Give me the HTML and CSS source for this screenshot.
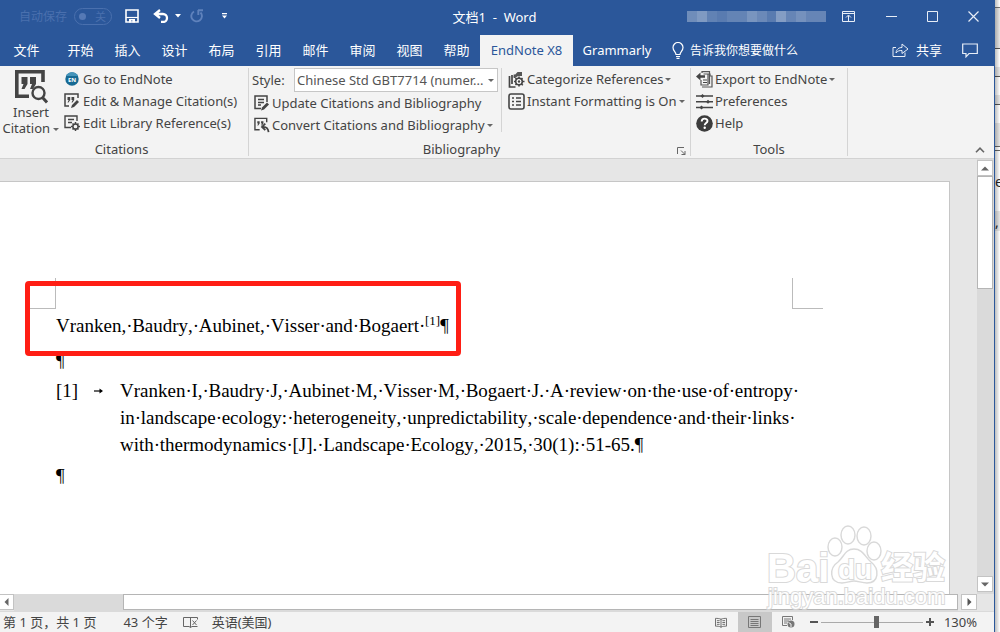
FILE: index.html
```html
<!DOCTYPE html>
<html lang="zh-CN">
<head>
  <meta charset="UTF-8" />
  <meta name="viewport" content="width=device-width, initial-scale=1.0" />
  <title>文档1 - Word</title>
  <link rel="stylesheet" href="styles.css">
</head>
<body>
  <div class="window">
    <header class="titlebar">
      <div class="quick">
        <label class="autosave" for="autosave">自动保存</label>
        <span class="toggle"><input type="checkbox" id="autosave" disabled /><span>关</span></span>
        <button class="save" aria-label="保存"><svg width="14" height="14" viewBox="0 0 14 14"><path d="M1 1h12v12H1z" fill="none" stroke="#fff" stroke-width="1.6"/><path d="M1 8.500h12" fill="none" stroke="#fff" stroke-width="1.200"/><path d="M4 10h6v3.500H7.500v-2H6v2H4z" fill="#fff"/></svg></button>
        <button class="undo" aria-label="撤销"><svg width="16" height="14" viewBox="0 0 16 14"><path d="M7 1L2 5l5 4M2.500 5H10a4 4 0 0 1 0 8H8" fill="none" stroke="#fff" stroke-width="2.300"/></svg></button>
        <svg class="undo-arrow" width="6" height="4" viewBox="0 0 6 4"><path d="M0 0h6L3 3.500z" fill="#fff"/></svg>
        <button class="redo" aria-label="重复"><svg width="14" height="14" viewBox="0 0 14 14"><path d="M4 2.500a5.300 5.300 0 1 0 6.500 1M8 1.200h5M8.300 1v5" fill="none" stroke="#5f82bc" stroke-width="1.900"/></svg></button>
        <button class="more" aria-label="自定义"><svg width="5" height="6" viewBox="0 0 6 7"><path d="M0 0h6v1.300H0zM0 3h6L3 6.500z" fill="#fff"/></svg></button>
      </div>
      <div class="doc-title">文档1 &nbsp;-&nbsp; Word</div>
      <div class="window-controls">
        <svg class="account" width="139" height="11" viewBox="0 0 139 11">
          <g fill="#fff"><path opacity=".32" d="M0 0h10v11H0z"/><path opacity=".4" d="M10 0h10v11H10z"/><path opacity=".26" d="M20 0h10v11H20z"/><path opacity=".22" d="M30 0h10v11H30z"/><path opacity=".27" d="M40 0h20v11H40z"/><path opacity=".37" d="M60 0h10v11H60z"/><path opacity=".3" d="M70 0h10v11H70z"/><path opacity=".22" d="M80 0h9v11h-9z"/><path opacity=".42" d="M89 0h10v11H89z"/><path opacity=".28" d="M99 0h10v11H99z"/><path opacity=".35" d="M109 0h10v11h-10z"/><path opacity=".28" d="M119 0h20v11h-20z"/></g>
        </svg>
        <button class="ribbon-mode" aria-label="功能区显示选项"><svg width="13" height="11" viewBox="0 0 13 11"><path d="M.5.500h12v10H.5zM.5 2.500h12M6.500 10V4.500M4 6.500L6.500 4 9 6.500" fill="none" stroke="#e8eef7"/></svg></button>
        <button aria-label="最小化"><svg width="11" height="11" viewBox="0 0 11 11"><path d="M0 5.500h11" stroke="#e8eef7"/></svg></button>
        <button aria-label="最大化"><svg width="11" height="11" viewBox="0 0 11 11"><path d="M.5.500h10v10H.5z" fill="none" stroke="#e8eef7"/></svg></button>
        <button aria-label="关闭"><svg width="11" height="11" viewBox="0 0 11 11"><path d="M.5.500l10 10M10.500.500l-10 10" stroke="#e8eef7" stroke-width="1.200"/></svg></button>
      </div>
    </header>

    <nav class="tabs">
      <a class="file" href="#">文件</a>
      <a href="#">开始</a>
      <a href="#">插入</a>
      <a href="#">设计</a>
      <a href="#">布局</a>
      <a href="#">引用</a>
      <a href="#">邮件</a>
      <a href="#">审阅</a>
      <a href="#">视图</a>
      <a href="#">帮助</a>
      <a class="active" href="#">EndNote X8</a>
      <a class="grammarly" href="#">Grammarly</a>
      <label class="tell-me" for="tell-me">
        <svg width="12" height="17" viewBox="0 0 12 17"><path d="M4 12.500C4 10 1 9 1 5.500a5 5 0 0 1 10 0C11 9 8 10 8 12.500zM4 14.500h4M4.500 16.300h3" fill="none" stroke="#fff" stroke-width="1.200"/></svg>
        <input type="text" id="tell-me" placeholder="告诉我你想要做什么" />
      </label>
      <button class="share"><svg width="17" height="15" viewBox="0 0 17 15"><path d="M4 5.500H1v9h12v-4M4 11c.5-4 3-5.500 6-5.500V2l6 5-6 4.500V8.500C7.500 8.300 5.500 9 4 11z" fill="none" stroke="#e8eef7"/></svg>共享</button>
      <button class="comment" aria-label="批注"><svg width="16" height="15" viewBox="0 0 16 15"><path d="M.7 1h14.600v9.500H7L4 13.800v-3.300H.7z" fill="none" stroke="#e8eef7" stroke-width="1.200"/></svg></button>
    </nav>

    <section class="ribbon">
      <div class="group citations">
        <div class="group-body">
          <button class="insert">
            <svg width="33" height="34" viewBox="0 0 33 34"><path d="M28 12V1.800H1.800v24.400H14" fill="none" stroke="#444" stroke-width="3.600"/><path d="M6.500 7h6v7l-3 5h-3l2-5h-2zM15 7h6v7l-3 5h-3l2-5h-2z" fill="#444"/><circle cx="23.500" cy="23" r="6" fill="#f3f3f3" stroke="#444" stroke-width="2.400"/><path d="M27.500 27.500l4.500 5" stroke="#444" stroke-width="3"/></svg>
            <span>Insert</span>
            <span>Citation <i class="caret"></i></span>
          </button>
          <div class="commands">
            <button><svg width="16" height="16" viewBox="0 0 16 16"><circle cx="8" cy="8" r="6.700" fill="#176a94"/><path d="M2 5a6.700 6.700 0 0 1 12 0z" fill="#4594ba"/><text x="8" y="10.500" text-anchor="middle" class="en-mark">EN</text></svg>Go to EndNote</button>
            <button><svg width="16" height="16" viewBox="0 0 16 16"><path d="M5 13H1V1h13v4" fill="none" stroke="#444" stroke-width="1.500"/><path d="M3.500 4h2.700v3L4.500 9.500H3.500L4.700 7H3.500zM7.500 4h2.700v3L8.500 9.500h-1L8.700 7H7.500zM7 15l1-3 5-5 2 2-5 5z" fill="#444"/></svg>Edit &amp; Manage Citation(s)</button>
            <button><svg width="16" height="16" viewBox="0 0 16 16"><path d="M7 12.500H1V1h12v5M4 4.500h6M4 7.500h4" fill="none" stroke="#444" stroke-width="1.400"/><circle cx="11.500" cy="11.500" r="2.600" fill="none" stroke="#444" stroke-width="1.500"/><path d="M11.500 7v2M11.500 14v2M7 11.500h2M14 11.500h2M8.500 8.500l1 1M13.500 13.500l1 1M14.500 8.500l-1 1M9.500 13.500l-1 1" stroke="#444" stroke-width="1.500"/></svg>Edit Library Reference(s)</button>
          </div>
        </div>
        <div class="group-name">Citations</div>
      </div>

      <div class="group bibliography">
        <div class="group-body">
          <div class="commands bib-left">
            <div class="style-row">
              <label for="style">Style:</label>
              <span class="select-box"><select id="style"><option>Chinese Std GBT7714 (numer...</option></select><i class="caret"></i></span>
            </div>
            <button><svg width="16" height="16" viewBox="0 0 16 16"><path d="M7 13.500H1V1h12v6M4 4.500h6M4 7.500h6M4 10h3" fill="none" stroke="#444" stroke-width="1.500"/><path d="M7 15.500l1-3 5-5 2 2-5 5z" fill="#444"/></svg>Update Citations and Bibliography</button>
            <button><svg width="16" height="16" viewBox="0 0 17 16"><path d="M6 13H1V1h12.500v4" fill="none" stroke="#444" stroke-width="1.500"/><path d="M3.500 4h2.500v2.500L4.500 8.500h-1l1-2h-1zM7.500 4H10v2.500L8.500 8.500h-1l1-2h-1z" fill="#444"/><path d="M12 6.500L8.500 10l3.500 3.500M9 10c4-.5 6 1.500 6.500 5.500" fill="none" stroke="#444" stroke-width="1.900"/></svg>Convert Citations and Bibliography<i class="caret"></i></button>
          </div>
          <div class="commands bib-right">
            <button><svg width="17" height="17" viewBox="0 0 17 17"><path d="M1.500 5v11h6M4 4v9M6.500 3.500V7" fill="none" stroke="#444" stroke-width="1.700"/><path d="M5.500 5.500L9.500 1H14v4h-4L7 7z" fill="#555"/><circle cx="11" cy="10.500" r="3.300" fill="#fff" stroke="#444" stroke-width="1.600"/><circle cx="11" cy="10.500" r="1.200" fill="#444"/><path d="M11 5.500v2M11 13.500v2M6 10.500h2M14 10.500h2.500M7.500 7l1 1M13.500 13l1.300 1.300M14.500 7l-1 1M8.500 13l-1 1" stroke="#444" stroke-width="1.600"/></svg>Categorize References<i class="caret"></i></button>
            <button><svg width="17" height="17" viewBox="0 0 17 17"><rect x="1" y="1" width="15" height="15" rx="2" fill="none" stroke="#444" stroke-width="1.600"/><path d="M4 5h2M8 5h5M4 8.500h2M8 8.500h5M4 12h2M8 12h5" stroke="#444" stroke-width="1.500"/></svg>Instant Formatting is On<i class="caret"></i></button>
          </div>
        </div>
        <div class="group-name">Bibliography</div>
        <button class="launcher" aria-label="Bibliography options"><svg width="9" height="8" viewBox="0 0 9 8"><path d="M.5 7V.500H7M4 3.500l4 4M8 4v3.500H4.500" fill="none" stroke="#666"/></svg></button>
      </div>

      <div class="group tools">
        <div class="group-body">
          <div class="commands">
            <button><svg width="17" height="17" viewBox="0 0 17 17"><path d="M6 2V.700h7.500V13M5 9v5h7V3M7.500 3h6.500v2h2v11H6" fill="none" stroke="#555" stroke-width="1.200"/><path d="M0 5.500L4.500 1.500v2.700H9v2.600H4.500v2.700z" fill="#444"/><path d="M7 9h4M7 11.500h4" stroke="#444"/></svg>Export to EndNote<i class="caret"></i></button>
            <button><svg width="17" height="17" viewBox="0 0 17 17"><path d="M0 3h17M0 8.800h17M0 14.500h17" stroke="#444" stroke-width="1.500"/><path d="M4.500 3l2-2 2 2-2 2zM10 8.800l2-2 2 2-2 2zM3.500 14.500l2-2 2 2-2 2z" fill="#444"/></svg>Preferences</button>
            <button><svg width="17" height="17" viewBox="0 0 17 17"><circle cx="8.500" cy="8.500" r="8.300" fill="#3c3c3c"/><path d="M5.700 6.500c0-3.800 5.800-3.600 5.800-.5 0 2-2.800 2.200-2.800 4.300" fill="none" stroke="#fff" stroke-width="1.900"/><circle cx="8.700" cy="12.800" r="1.200" fill="#fff"/></svg>Help</button>
          </div>
        </div>
        <div class="group-name">Tools</div>
      </div>
      <button class="collapse" aria-label="折叠功能区"><svg width="10" height="6" viewBox="0 0 10 6"><path d="M1 5.200L5 1.200l4 4" fill="none" stroke="#666" stroke-width="1.600"/></svg></button>
    </section>

    <main class="workspace">
      <div class="canvas">
        <article class="page">
          <div class="margins"><span class="mark left"></span><span class="mark right"></span></div>
          <p class="cite">Vranken,<i>·</i>Baudry,<i>·</i>Aubinet,<i>·</i>Visser<i>·</i>and<i>·</i>Bogaert<i>·</i><sup>[1]</sup>¶</p>
          <p>¶</p>
          <div class="reference">
            <span class="number">[1]</span>
            <svg class="tab-mark" width="9" height="6" viewBox="0 0 9 6"><path d="M0 3h7" stroke="#000" stroke-width="1.200"/><path d="M5.500.500L9 3 5.500 5.500z"/></svg>
            <div class="entry">
              <div>Vranken<i>·</i>I,<i>·</i>Baudry<i>·</i>J,<i>·</i>Aubinet<i>·</i>M,<i>·</i>Visser<i>·</i>M,<i>·</i>Bogaert<i>·</i>J.<i>·</i>A<i>·</i>review<i>·</i>on<i>·</i>the<i>·</i>use<i>·</i>of<i>·</i>entropy<i>·</i></div>
              <div>in<i>·</i>landscape<i>·</i>ecology:<i>·</i>heterogeneity,<i>·</i>unpredictability,<i>·</i>scale<i>·</i>dependence<i>·</i>and<i>·</i>their<i>·</i>links<i>·</i></div>
              <div>with<i>·</i>thermodynamics<i>·</i>[J].<i>·</i>Landscape<i>·</i>Ecology,<i>·</i>2015,<i>·</i>30(1):<i>·</i>51-65.¶</div>
            </div>
          </div>
          <p>¶</p>
          <div class="highlight"></div>
        </article>
      </div>
      <div class="vscroll">
        <button aria-label="向上"><svg width="8" height="5" viewBox="0 0 8 5"><path d="M0 4.500L4 .500l4 4z" fill="#666"/></svg></button>
        <div class="thumb"></div>
        <button class="down" aria-label="向下"><svg width="8" height="5" viewBox="0 0 8 5"><path d="M0 .500h8l-4 4z" fill="#666"/></svg></button>
      </div>
    </main>

    <div class="hscroll">
      <button aria-label="向左"><svg width="5" height="8" viewBox="0 0 5 8"><path d="M4.500 0v8L.5 4z" fill="#666"/></svg></button>
      <div class="track"><div class="thumb"></div></div>
      <button aria-label="向右"><svg width="5" height="8" viewBox="0 0 5 8"><path d="M.5 0v8l4-4z" fill="#555"/></svg></button>
    </div>

    <footer class="statusbar">
      <span class="pages">第 1 页，共 1 页</span>
      <span class="words">43 个字</span>
      <svg class="proof" width="15" height="12" viewBox="0 0 15 12"><path d="M7 1.500H.5v9H6l1.500 1L9 10.500h5.500M7.500 1v10.500M7 1.500h7.500v2M9.500 4.500l4 4.500M13.500 4.500l-4 4.500" fill="none" stroke="#666"/></svg>
      <span class="language">英语(美国)</span>
      <div class="views">
        <button aria-label="阅读视图"><svg width="12" height="11" viewBox="0 0 13 12"><path d="M6.500 2v9.500M.5 1.500c2 0 4 0 6 1 2-1 4-1 6-1v8.500c-2 0-4 0-6 1-2-1-4-1-6-1zM2 4h3M2 6h3M2 8h3M8 4h3M8 6h3M8 8h3" fill="none" stroke="#666"/></svg></button>
        <button class="current" aria-label="页面视图"><svg width="13" height="12" viewBox="0 0 13 12"><path d="M.5.500h12v11H.5zM2.500 3.500h8M2.500 5.500h8M2.500 7.500h8M2.500 9.500h8" fill="none" stroke="#777"/></svg></button>
        <button aria-label="Web 版式"><svg width="13" height="12" viewBox="0 0 13 12"><path d="M5 9.500H.5v-9h10V4M2 3h7M2 5h5M2 7h3" fill="none" stroke="#777"/><circle cx="9" cy="8" r="3.500" fill="#777"/><path d="M6.500 6.500L9 8v3" stroke="#f1f1f1" fill="none"/></svg></button>
      </div>
      <div class="zoom">
        <button aria-label="缩小"><svg width="8" height="8" viewBox="0 0 8 8"><path d="M0 4h8" stroke="#555" stroke-width="2"/></svg></button>
        <input type="range" min="10" max="230" value="130" aria-label="缩放" />
        <button aria-label="放大"><svg width="8" height="8" viewBox="0 0 8 8"><path d="M0 4h8M4 0v8" stroke="#555" stroke-width="2"/></svg></button>
        <output>130%</output>
      </div>
    </footer>
  </div>

  <aside class="behind"><span>e</span><span class="comma">,</span></aside>

  <svg class="watermark" width="184" height="88" viewBox="0 0 184 88">
    <g fill="#fff" stroke="#d5d5d5" stroke-width="2">
      <text class="wm-logo" x="1" y="57">Bai</text>
      <g stroke-width="1.400">
        <ellipse cx="69" cy="22" rx="7" ry="9"/>
        <ellipse cx="82" cy="10" rx="7" ry="9"/>
        <ellipse cx="98" cy="11" rx="7" ry="9"/>
        <ellipse cx="108" cy="26" rx="7" ry="9"/>
        <path d="M88 24c-9 0-10 8-16 13-9 6-9 21 4 21 5 0 8-2 12-2s8 2 13 2c12 0 13-14 4-21-6-5-8-13-17-13z"/>
      </g>
      <text class="wm-du" x="72" y="54">du</text>
      <text class="wm-cn" x="115" y="54">经验</text>
      <text class="wm-url" x="2" y="79">jingyan.baidu.com</text>
    </g>
  </svg>
</body>
</html>
```

FILE: styles.css
```css
* {
  box-sizing: border-box;
}
body {
  margin: 0;
  display: flex;
  height: 100vh;
  overflow: hidden;
  font-family: "Noto Sans", "Noto Sans CJK SC", sans-serif;
  font-size: 13px;
  color: #444;
  background: #fff;
}
button, input, select {
  font: inherit;
  color: inherit;
  border: 0;
  margin: 0;
  padding: 0;
  background: none;
}
button, .tabs a {
  white-space: nowrap;
}
svg {
  flex: none;
}
.window {
  flex: 1;
  min-width: 0;
  display: flex;
  flex-direction: column;
  border-right: 1px solid #2b579a;
  background: #f3f3f3;
}

/* title bar */
.titlebar {
  display: grid;
  grid-template-columns: 1fr auto 1fr;
  align-items: center;
  height: 35px;
  flex: none;
  padding-bottom: 3px;
  color: #fff;
  background: #2b579a;
}
.quick {
  display: flex;
  align-items: center;
  padding-left: 19px;
}
.quick button {
  display: flex;
}
.autosave {
  font-size: 12px;
  color: #4a70ae;
}
.toggle {
  position: relative;
  margin-left: 7px;
  width: 38px;
  height: 17px;
  font-size: 11px;
  line-height: 15px;
  color: #4a70ae;
  border: 1px solid #4a70ae;
  border-radius: 9px;
  text-align: right;
  padding-right: 5px;
}
.toggle input {
  appearance: none;
  position: absolute;
  left: 4px;
  top: 4px;
  width: 7px;
  height: 7px;
  border-radius: 50%;
  background: #5579b5;
}
.save { margin-left: 13px; }
.undo { margin-left: 14px; }
.undo-arrow { margin-left: 6px; }
.redo { margin-left: 9px; }
.more { margin-left: 18px; }
.doc-title {
  padding-right: 5px;
}
.window-controls {
  display: flex;
  align-items: center;
  justify-content: flex-end;
  height: 30px;
}
.window-controls button {
  display: flex;
  justify-content: center;
  width: 41px;
}
.window-controls .ribbon-mode {
  width: 45px;
}

/* tabs */
.tabs {
  display: flex;
  align-items: stretch;
  height: 31px;
  flex: none;
  color: #fff;
  background: #2b579a;
}
.tabs a {
  width: 47px;
  line-height: 30px;
  text-align: center;
  text-decoration: none;
  color: #fff;
}
.tabs .file {
  width: 57px;
  padding-right: 4px;
}
.tabs .active {
  width: 93px;
  color: #2b579a;
  background: #f3f3f3;
}
.tabs .grammarly {
  width: 88px;
}
.tell-me {
  display: flex;
  align-items: center;
  gap: 6px;
  flex: 1;
  padding-left: 11px;
}
.tell-me input {
  width: 130px;
  font-size: 12px;
}
.tell-me input::placeholder {
  color: #fff;
}
.share {
  display: flex;
  align-items: center;
  gap: 7px;
  padding-bottom: 3px;
}
.comment {
  display: flex;
  align-items: center;
  padding: 0 16px 0 20px;
}

/* ribbon */
.ribbon {
  display: flex;
  height: 93px;
  flex: none;
  padding-top: 2px;
  border-bottom: 1px solid #d2d2d2;
}
.group {
  position: relative;
  display: flex;
  flex-direction: column;
  height: 88px;
  border-right: 1px solid #d4d4d4;
}
.citations { width: 249px; }
.bibliography { width: 442px; }
.tools { width: 157px; }
.group-body {
  display: flex;
  height: 70px;
  flex: none;
}
.group-name {
  line-height: 20px;
  padding-top: 1px;
  text-align: center;
}
.citations .group-name { padding-right: 5px; }
.bibliography .group-name { padding-right: 16px; }
.commands {
  display: flex;
  flex-direction: column;
}
.commands button {
  display: flex;
  align-items: center;
  flex: none;
  gap: 3px;
  height: 22px;
}
.caret {
  display: inline-block;
  border: 3px solid transparent;
  border-top-color: #666;
  border-bottom: 0;
  vertical-align: 2px;
}
.insert {
  display: flex;
  flex-direction: column;
  align-items: center;
  width: 62px;
  padding-top: 2px;
  line-height: 16px;
}
.citations .commands {
  padding-left: 2px;
}
.bib-left {
  width: 253px;
  height: 64px;
  padding-left: 5px;
  border-right: 1px solid #d4d4d4;
}
.bib-right {
  padding-left: 6px;
}
.bib-left button, .bib-right button, .tools .commands button {
  gap: 2px;
}
.tools .commands {
  padding-left: 5px;
}
.style-row {
  display: flex;
  align-items: center;
  justify-content: space-between;
  height: 24px;
  flex: none;
  padding-right: 3px;
}
.style-row label {
  margin-left: -2px;
}
.select-box {
  display: flex;
  align-items: center;
  width: 204px;
  height: 24px;
  padding-right: 3px;
  border: 1px solid #c6c6c6;
  background: #fff;
}
.select-box select {
  appearance: none;
  flex: 1;
  min-width: 0;
  padding-left: 2px;
  color: #555;
}
.en-mark {
  font-size: 6px;
  font-weight: bold;
  fill: #fff;
}
.launcher {
  position: absolute;
  right: 4px;
  bottom: 1px;
  display: flex;
}
.collapse {
  display: flex;
  margin: auto 9px 5px auto;
}

/* document */
.workspace {
  flex: 1;
  min-height: 0;
  display: flex;
  background: #e6e6e6;
}
.canvas {
  flex: 1;
  display: flex;
  padding: 22px 27px 0 0;
}
.page {
  position: relative;
  flex: 1;
  padding: 96px 0 0 56px;
  border-top: 1px solid #c6c6c6;
  border-right: 1px solid #c6c6c6;
  background: #fff;
  font-family: "Liberation Serif", serif;
  font-size: 19px;
  line-height: 32px;
  color: #000;
  font-kerning: none;
}
.page p {
  margin: 0;
}
.page i {
  display: inline-block;
  width: 6px;
  font-style: normal;
  text-align: center;
}
.page .cite {
  margin-bottom: 3px;
}
.page sup {
  font-size: 13px;
  line-height: 0;
  vertical-align: 7px;
}
.margins {
  display: flex;
  justify-content: space-between;
  height: 31px;
  margin: 0 126px 1px -26px;
}
.mark {
  width: 26px;
  border-bottom: 1px solid #bbb;
}
.mark.left {
  border-right: 1px solid #bbb;
}
.mark.right {
  width: 31px;
  border-left: 1px solid #bbb;
}
.reference {
  display: flex;
  margin-bottom: 2px;
  line-height: 27px;
}
.number {
  width: 38px;
}
.tab-mark {
  margin: 11px 17px 0 0;
}
.entry {
  white-space: nowrap;
}
.highlight {
  position: absolute;
  left: 25px;
  top: 99px;
  width: 436px;
  height: 75px;
  border: 5px solid #ff1e14;
  border-radius: 4px;
}

/* scroll bars */
.vscroll {
  display: flex;
  flex-direction: column;
  width: 17px;
  padding: 1px 1px 2px 0;
  background: #dadada;
}
.vscroll button, .hscroll button {
  display: flex;
  align-items: center;
  justify-content: center;
  flex: none;
  width: 16px;
  height: 16px;
  border: 1px solid #c3c3c3;
  background: #fff;
}
.vscroll .thumb {
  height: 113px;
  border: 1px solid #b5b5b5;
  background: #fff;
}
.vscroll .down {
  margin-top: auto;
}
.hscroll {
  display: flex;
  height: 17px;
  flex: none;
  padding-right: 17px;
  background: #e6e6e6;
}
.hscroll button:first-child {
  width: 14px;
  border-left: 0;
}
.hscroll .track {
  flex: 1;
  padding-left: 109px;
  margin-right: 3px;
  background: #dadada;
}
.hscroll .thumb {
  height: 16px;
  border: 1px solid #b5b5b5;
  background: #fff;
}

/* status bar */
.statusbar {
  display: flex;
  align-items: center;
  height: 21px;
  flex: none;
  padding-left: 3px;
  border-top: 1px solid #dadada;
  line-height: 20px;
}
.words { margin-left: 27px; }
.proof { margin-left: 15px; }
.language { margin-left: 14px; }
.views {
  display: flex;
  align-self: stretch;
  margin-left: auto;
}
.views button {
  display: flex;
  align-items: center;
  justify-content: center;
  width: 34px;
}
.views .current {
  background: #c8c8c8;
}
.zoom {
  display: flex;
  align-items: center;
  gap: 3px;
  padding: 0 17px 0 4px;
}
.zoom button {
  display: flex;
}
.zoom input {
  appearance: none;
  width: 102px;
  height: 14px;
  background: linear-gradient(#aaa, #aaa) center / 100% 1px no-repeat;
}
.zoom input::-webkit-slider-thumb {
  appearance: none;
  width: 5px;
  height: 12px;
  background: #666;
}
.zoom output {
  margin-left: 7px;
}

/* edge of the window underneath */
.behind {
  width: 5px;
  padding-top: 172px;
  overflow: hidden;
  font-size: 14px;
  line-height: 20px;
  color: #222;
  background:
    linear-gradient(90deg, rgba(0, 0, 0, 0.25), rgba(0, 0, 0, 0)),
    linear-gradient(#fff 7px, #777 7px, #777 8px, #e6e6e6 8px, #e6e6e6 48px, #555 48px, #555 49px, #fff 49px, #fff 67px, #e6e6e6 67px, #e6e6e6 76px, #555 76px, #555 77px, #fff 77px, #fff 95px, #e6e6e6 95px, #e6e6e6 104px, #555 104px, #555 105px, #fff 105px, #fff 123px, #e6e6e6 123px, #e6e6e6 146px, #666 146px, #666 147px, #fff 147px, #fff 150px, #666 150px, #666 151px, #fff 151px, #fff 211px, #e6e6e6 211px, #e6e6e6 231px, #fff 231px);
}
.behind span {
  display: block;
}
.behind .comma {
  margin-top: 20px;
}

.watermark {
  position: absolute;
  right: 50px;
  bottom: 19px;
  overflow: visible;
  opacity: 0.9;
}
.watermark text {
  paint-order: stroke;
  font-family: "Liberation Sans", "Noto Sans CJK SC", sans-serif;
  font-weight: bold;
}
.wm-logo { font-size: 40px; }
.wm-du { font-size: 28px; }
.wm-cn { font-size: 32px; }
.wm-url { font-size: 22px; }
.watermark .wm-url { font-weight: normal; }
```
